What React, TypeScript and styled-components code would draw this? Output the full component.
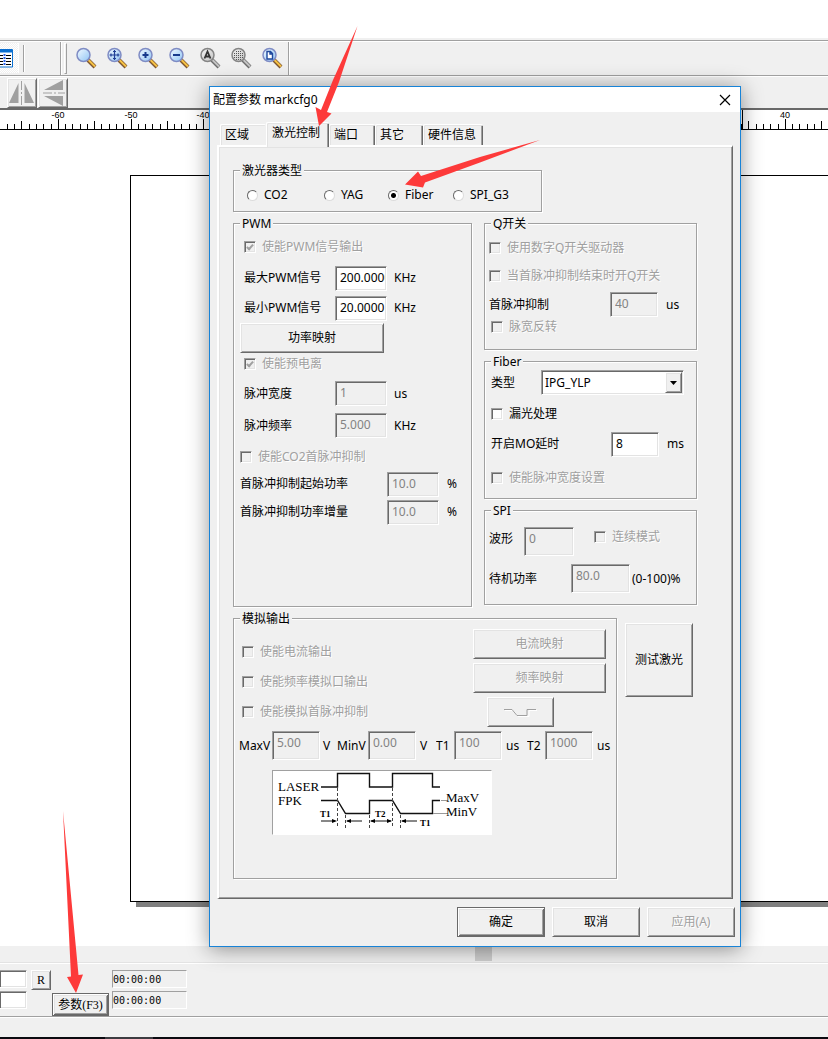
import React, { useState } from 'react';
import styled, { createGlobalStyle, css } from 'styled-components';

const Global = createGlobalStyle`
  *, *::before, *::after { box-sizing: border-box; }
  body {
    margin: 0;
    overflow-x: hidden;
    background: #fff;
    color: #000;
    font: 12px/16px "Noto Sans", "Noto Sans CJK SC", sans-serif;
  }
  button, input, select { font: inherit; color: inherit; margin: 0; }
`;

const FACE = '#f0f0f0';
const DARK = '#696969';
const MID = '#a0a0a0';
const LIGHT = '#e3e3e3';

const raised = css`
  border: 1px solid;
  border-color: #fff ${DARK} ${DARK} #fff;
  box-shadow: inset 1px 1px 0 ${LIGHT}, inset -1px -1px 0 ${MID};
`;

const sunken = css`
  border: 1px solid;
  border-color: ${MID} #fff #fff ${MID};
  box-shadow: inset 1px 1px 0 ${DARK}, inset -1px -1px 0 ${LIGHT};
`;

const embossed = css`
  color: ${MID};
  text-shadow: 1px 1px 0 #fff;
`;

/* ---------- main window ---------- */

const Shell = styled.div`
  position: relative;
  display: flex;
  flex-direction: column;
  min-height: 100vh;
  overflow: hidden;
`;

const TopGap = styled.div`
  height: 38px;
`;

const ToolStrip = styled.div`
  display: flex;
  height: 38px;
  padding-top: 2px;
  background: ${FACE};
  border-bottom: 1px solid ${MID};
`;

const StripBody = styled.div`
  display: flex;
  flex: 1;
  border-top: 1px solid ${MID};
  box-shadow: inset 0 1px 0 #fff;
`;

const ListButton = styled.button`
  width: 19px;
  height: 30px;
  margin-top: 2px;
  padding: 0;
  border: 0;
  border-right: 1px solid #fff;
  background: repeating-conic-gradient(#fff 0 25%, ${FACE} 0 50%) 0 0 / 2px 2px;
  text-align: left;
  svg { display: block; }
`;

const Divider = styled.span<{ $ml: number; $short?: boolean }>`
  width: 2px;
  margin-left: ${(p) => p.$ml}px;
  margin-top: ${(p) => (p.$short ? 4 : 1)}px;
  margin-bottom: ${(p) => (p.$short ? 3 : 0)}px;
  background: linear-gradient(90deg, ${MID} 50%, #fff 50%);
`;

const Grip = styled.span`
  width: 3px;
  margin: 2px 0 1px 2px;
  border: 1px solid;
  border-color: #fff ${MID} ${MID} #fff;
`;

const ZoomTools = styled.div`
  display: flex;
  gap: 9px;
  margin-left: 8px;
  padding-top: 6px;
`;

const ZoomButton = styled.button`
  width: 22px;
  height: 22px;
  padding: 0;
  border: 0;
  background: none;
  svg { display: block; }
`;

const MirrorStrip = styled.div`
  display: flex;
  gap: 1px;
  height: 34px;
  padding: 1px 0 0 7px;
  background: ${FACE};
  border-top: 1px solid #fff;
  border-bottom: 2px solid ${DARK};
`;

const MirrorButton = styled.button`
  ${raised}
  width: 30px;
  height: 30px;
  padding: 0;
  background: ${FACE};
  svg { display: block; margin: 1px; }
`;

const RulerSvg = styled.svg`
  display: block;
  width: 100%;
  height: 20px;
  border-bottom: 1px solid #000;
  font-family: "Liberation Sans", sans-serif;
  font-size: 9px;
`;

const Canvas = styled.main`
  display: flex;
  flex: 1;
  min-height: 700px;
  padding: 45px 0 44px 130px;
`;

const Sheet = styled.div`
  flex: 1;
  border: 1px solid #000;
  border-right: 0;
  background: #fff;
  box-shadow: 6px 5px 0 #808080;
`;

const ScrollTrack = styled.div`
  height: 17px;
  padding-left: 475px;
  background: ${FACE};
  border-bottom: 1px solid ${LIGHT};
`;

const ScrollThumb = styled.div`
  width: 17px;
  height: 15px;
  background: #cdcdcd;
`;

const MarkPanel = styled.div`
  display: flex;
  align-items: flex-start;
  height: 53px;
  padding-top: 6px;
  background: ${FACE};
  border-top: 1px solid #fff;
  font-family: "DejaVu Sans Mono", "Noto Sans CJK SC", monospace;
  font-size: 10px;
`;

const Stack = styled.div<{ $w: number; $ml?: number }>`
  display: flex;
  flex-direction: column;
  gap: 3px;
  width: ${(p) => p.$w}px;
  margin-left: ${(p) => p.$ml ?? 0}px;
`;

const EdgeInput = styled.input`
  ${sunken}
  width: 100%;
  height: 18px;
  border-left: 0;
  background: #fff;
`;

const TimeBox = styled.output`
  height: 18px;
  border: 1px solid;
  border-color: ${MID} #fff #fff ${MID};
  line-height: 17px;
`;

const RButton = styled.button`
  ${raised}
  width: 20px;
  height: 20px;
  margin-left: 4px;
  padding: 0;
  background: ${FACE};
  font-family: "Liberation Serif", serif;
  font-size: 12px;
`;

const defaultFrame = css`
  border: 1px solid ${DARK};
  box-shadow: inset 1px 1px 0 #fff, inset -1px -1px 0 ${DARK},
    inset 2px 2px 0 ${LIGHT}, inset -2px -2px 0 ${MID};
`;

const ParamButton = styled.button`
  ${defaultFrame}
  align-self: flex-end;
  width: 57px;
  height: 23px;
  margin-left: 1px;
  padding: 0;
  background: ${FACE};
  font-family: "Liberation Serif", "Noto Sans CJK SC", serif;
  font-size: 12px;
  white-space: nowrap;
`;

const StatusBar = styled.div`
  height: 21px;
  background: ${FACE};
  border-top: 1px solid ${MID};
  box-shadow: inset 0 1px 0 #fff;
`;

const TaskEdge = styled.div`
  height: 2px;
  background: linear-gradient(90deg, #0a0a10 105px, #3c3b40 105px 153px, #0a0a10 153px);
`;

/* ---------- dialog ---------- */

const Dialog = styled.section`
  position: absolute;
  isolation: isolate;
  left: 209px;
  top: 86px;
  width: 532px;
  border: 1px solid #1883d7;
  background: ${FACE};
  box-shadow: 0 2px 20px rgba(0, 0, 0, 0.42);
`;

const TitleBar = styled.header`
  display: flex;
  align-items: center;
  justify-content: space-between;
  height: 25px;
  padding: 0 9px 0 3px;
  background: #fff;
`;

const Title = styled.h1`
  margin: 0;
  font-size: 12px;
  font-weight: 400;
`;

const CloseButton = styled.button`
  padding: 0;
  border: 0;
  background: none;
  svg { display: block; }
`;

const Tabs = styled.div`
  display: flex;
  align-items: flex-end;
  height: 33px;
  padding-left: 10px;
`;

const Tab = styled.button<{ $w: number; $active?: boolean }>`
  position: relative;
  width: ${(p) => p.$w}px;
  height: ${(p) => (p.$active ? 25 : 21)}px;
  margin-bottom: ${(p) => (p.$active ? -2 : 0)}px;
  padding: 0 0 ${(p) => (p.$active ? 4 : 1)}px ${(p) => (p.$active ? 5 : 4)}px;
  z-index: ${(p) => (p.$active ? 1 : 0)};
  border: 0;
  border-top: 1px solid #fff;
  border-left: 1px solid #fff;
  border-radius: 2px 2px 0 0;
  box-shadow: inset 1px 1px 0 ${LIGHT}, inset -1px 0 0 ${DARK}, inset -2px 0 0 ${MID};
  background: ${FACE};
  text-align: left;
  white-space: nowrap;
  &:first-child { box-shadow: inset 1px 1px 0 ${LIGHT}; }
`;

const Panel = styled.div`
  display: flex;
  flex-direction: column;
  gap: 4px;
  margin: 0 7px;
  padding: 16px 0 19px 14px;
  border: solid;
  border-color: #fff ${DARK} ${DARK} #fff;
  border-width: 2px 1px 1px 2px;
  box-shadow: inset -1px -1px 0 ${MID}, inset 1px 1px 0 ${LIGHT};
`;

const Columns = styled.div<{ $gap: number }>`
  display: flex;
  align-items: flex-start;
  gap: ${(p) => p.$gap}px;
`;

const Column = styled.div`
  display: flex;
  flex-direction: column;
  gap: 4px;
`;

const Group = styled.fieldset<{ $w: number; $pb: number }>`
  width: ${(p) => p.$w}px;
  min-width: 0;
  margin: 0;
  padding: 0 0 ${(p) => p.$pb}px;
  border: 1px solid ${MID};
  box-shadow: 1px 1px 0 #fff, inset 1px 1px 0 #fff;
`;

const Legend = styled.legend`
  height: 15px;
  margin-left: 6px;
  padding: 0 2px;
  background: ${FACE};
  line-height: 15px;
`;

const Row = styled.div<{ $mt: number; $in: number; $mid?: boolean }>`
  display: flex;
  align-items: ${(p) => (p.$mid ? 'center' : 'baseline')};
  margin-top: ${(p) => p.$mt}px;
  padding-left: ${(p) => p.$in}px;
  white-space: nowrap;
`;

const Caption = styled.label<{ $w: number }>`
  width: ${(p) => p.$w}px;
  overflow: clip;
`;

const Unit = styled.span<{ $w?: number; $gap?: number }>`
  width: ${(p) => (p.$w ? `${p.$w}px` : 'auto')};
  padding-left: ${(p) => p.$gap ?? 8}px;
`;

const Field = styled.input<{ $w: number; $tall?: boolean }>`
  ${sunken}
  width: ${(p) => p.$w}px;
  height: ${(p) => (p.$tall ? 29 : 25)}px;
  padding: 0 1px ${(p) => (p.$tall ? 6 : 2)}px 4px;
  border-radius: 0;
  outline: 0;
  background: #fff;
  &:disabled { background: ${FACE}; color: #838383; }
`;

const CheckLabel = styled.label<{ $off?: boolean }>`
  display: flex;
  align-items: center;
  gap: 6px;
  height: 14px;
  line-height: 14px;
  white-space: nowrap;
  ${(p) => p.$off && embossed}
`;

const CheckBox = styled.input`
  ${sunken}
  appearance: none;
  display: grid;
  place-items: center;
  width: 12px;
  height: 12px;
  background: #fff;
  &:disabled { background: ${FACE}; }
  &:checked::after {
    content: "";
    width: 4px;
    height: 7px;
    margin-top: -2px;
    border: solid #000;
    border-width: 0 2px 2px 0;
    transform: rotate(42deg);
  }
  &:checked:disabled::after { border-color: ${MID}; }
`;

const RadioLabel = styled.label<{ $w: number }>`
  display: flex;
  align-items: center;
  gap: 6px;
  width: ${(p) => p.$w}px;
  height: 14px;
`;

const RadioInput = styled.input`
  appearance: none;
  width: 11px;
  height: 11px;
  border: 1px solid;
  border-color: ${DARK} #dcdcdc #dcdcdc ${DARK};
  border-radius: 50%;
  background: #fff;
  &:checked { background: radial-gradient(circle, #000 2px, #fff 3px); }
`;

const PushButton = styled.button<{ $w: number; $h?: number; $default?: boolean }>`
  ${(p) => (p.$default ? defaultFrame : raised)}
  display: grid;
  place-items: center;
  width: ${(p) => p.$w}px;
  height: ${(p) => p.$h ?? 30}px;
  padding: 0;
  background: ${FACE};
  white-space: nowrap;
  &:disabled { ${embossed} }
`;

const SelectBox = styled.div`
  ${sunken}
  display: flex;
  width: 143px;
  height: 25px;
  padding: 1px;
  background: #fff;
`;

const Select = styled.select`
  appearance: none;
  flex: 1;
  min-width: 0;
  padding: 0 0 0 2px;
  border: 0;
  outline: 0;
  background: transparent;
`;

const SelectArrow = styled.span`
  ${raised}
  display: grid;
  place-items: center;
  width: 17px;
  background: ${FACE};
  pointer-events: none;
`;

const AnalogTop = styled.div`
  display: flex;
  height: 101px;
  padding-left: 8px;
`;

const AnalogChecks = styled.div`
  display: flex;
  flex-direction: column;
  gap: 16px;
  width: 231px;
  padding-top: 19px;
`;

const AnalogButtons = styled.div`
  display: flex;
  flex-direction: column;
  gap: 4px;
  padding-top: 3px;
`;

const PulseSlot = styled.div`
  padding-left: 14px;
`;

const TestSlot = styled.div`
  padding-top: 12px;
`;

const Diagram = styled.svg`
  display: block;
  width: 220px;
  height: 65px;
  margin: 10px 0 0 38px;
  border: 1px solid;
  border-color: ${MID} #fff #fff ${MID};
  background: #fff;
  font-family: "Liberation Serif", serif;
`;

const Footer = styled.footer`
  display: flex;
  justify-content: flex-end;
  gap: 7px;
  padding: 8px 5px 9px;
`;

const Arrows = styled.svg`
  position: absolute;
  left: 0;
  top: 0;
  pointer-events: none;
`;

/* ---------- pieces ---------- */

type LensKind = 'plain' | 'move' | 'plus' | 'minus' | 'all' | 'grid' | 'page';

const lensNames: Record<LensKind, string> = {
  plain: '缩放', move: '平移', plus: '放大', minus: '缩小', all: '全部', grid: '选择', page: '页面',
};

function Lens({ kind }: { kind: LensKind }) {
  const gray = kind === 'all' || kind === 'grid';
  const id = `lens-${kind}`;
  return (
    <svg width="22" height="22" viewBox="0 0 22 22">
      <defs>
        <linearGradient id={id} x1="0" y1="0" x2="1" y2="1">
          <stop offset="0" stopColor={gray ? '#f4f4f4' : '#f2faff'} />
          <stop offset="1" stopColor={gray ? '#c2c2c2' : '#8fc4f4'} />
        </linearGradient>
      </defs>
      <path d="M13 13L20 20" stroke={gray ? '#6d6d6d' : '#7d5530'} strokeWidth="4" />
      <path d="M13.500 13L20 19.500" stroke={gray ? '#c4c4c4' : '#f6c244'} strokeWidth="2" />
      <circle cx="8.500" cy="8" r="6.500" fill={`url(#${id})`} stroke={gray ? '#858585' : '#7f8cc4'} strokeWidth="1.500" />
      {kind === 'move' && (
        <path d="M8.500 3v10M3.500 8h10M7 4.500h3M7 11.500h3M5 6.500v3M12 6.500v3" stroke="#1f3f95" strokeWidth="1.200" />
      )}
      {kind === 'plus' && <path d="M8.500 5v6M5.500 8h6" stroke="#173a8c" strokeWidth="2" />}
      {kind === 'minus' && <path d="M5 8h7" stroke="#173a8c" strokeWidth="2" />}
      {kind === 'all' && <path d="M5.500 11.500L8.500 4.500L11.500 11.500M6.500 9.500h4" stroke="#333" strokeWidth="1.800" fill="none" />}
      {kind === 'grid' && (
        <path d="M6 4.500h6M4 6.500h10M4 8.500h10M4 10.500h10M6 12.500h6" stroke="#555" strokeWidth="1" strokeDasharray="1 1" />
      )}
      {kind === 'page' && <path d="M6 4.500h3.500l2 2v5.500H6zM9 4.500v2.500h2.500" fill="#fff" stroke="#1d479d" strokeWidth="1.400" />}
    </svg>
  );
}

const rulerMarks = Array.from({ length: 151 }, (_, i) => i - 67);
const rulerLabels = [-60, -50, -40, -30, -20, -10, 0, 10, 20, 30, 40];
const rulerX = (n: number) => Math.round(494 + n * 7.27);

function Ruler() {
  return (
    <RulerSvg aria-hidden="true">
      {rulerMarks.map((n) => {
        const len = n % 10 === 0 ? 10 : n % 5 === 0 ? 8 : 5;
        return <rect key={n} x={rulerX(n)} y={19 - len} width="1" height={len} />;
      })}
      <rect x="742" y="0" width="1" height="19" />
      {rulerLabels.map((n) => (
        <text key={n} x={rulerX(n)} y="8" textAnchor="middle">{n}</text>
      ))}
    </RulerSvg>
  );
}

function Check({ text, off, on }: { text: string; off?: boolean; on?: boolean }) {
  return (
    <CheckLabel $off={off}>
      <CheckBox type="checkbox" disabled={off} defaultChecked={on} />
      {text}
    </CheckLabel>
  );
}

interface EntryProps {
  id: string;
  label: string;
  cap: number;
  value: string;
  w: number;
  unit: string;
  off?: boolean;
  tall?: boolean;
  unitW?: number;
  unitGap?: number;
}

function Entry({ id, label, cap, value, w, unit, off, tall, unitW, unitGap }: EntryProps) {
  return (
    <>
      <Caption htmlFor={id} $w={cap}>{label}</Caption>
      <Field id={id} $w={w} $tall={tall} defaultValue={value} disabled={off} />
      {unit && <Unit $w={unitW} $gap={unitGap}>{unit}</Unit>}
    </>
  );
}

function PulseDiagram() {
  return (
    <Diagram viewBox="1 1 218 63" role="img" aria-label="LASER FPK">
      <g fill="none" stroke="#111" strokeWidth="1.400">
        <path d="M49 17H65.500V3.500H97.500V17H120.500V3.500H160.500V17H168" />
        <path d="M49 30.500H65.500L73.500 43.500H97.500V30.500H120.500L128.500 43.500H160.500V30.500H168" />
      </g>
      <path d="M169 30.500H176M161 43.500H176" stroke="#999" />
      <g stroke="#444" strokeDasharray="3 2">
        <path d="M65.500 18V58M73.500 45V58M97.500 45V58M120.500 18V58M128.500 45V58" />
      </g>
      <g stroke="#111">
        <path d="M49 51H63M75 51H90M99 51H119M130 51H145" />
      </g>
      <path d="M65 51l-5-2v4zM74 51l5-2v4zM98 51l5-2v4zM120 51l-5-2v4zM129 51l5-2v4z" />
      <g fontSize="13">
        <text x="6" y="21">LASER</text>
        <text x="6" y="35">FPK</text>
        <text x="174" y="32">MaxV</text>
        <text x="174" y="46">MinV</text>
      </g>
      <g fontSize="9" fontWeight="700">
        <text x="48" y="47">T1</text>
        <text x="103" y="47">T2</text>
        <text x="148" y="56">T1</text>
      </g>
    </Diagram>
  );
}

const tabs = [
  { name: '区域', w: 46 },
  { name: '激光控制', w: 63 },
  { name: '端口', w: 46 },
  { name: '其它', w: 48 },
  { name: '硬件信息', w: 60 },
];

const lasers = [
  { name: 'CO2', w: 77 },
  { name: 'YAG', w: 64 },
  { name: 'Fiber', w: 65 },
  { name: 'SPI_G3', w: 65 },
];

const lenses: LensKind[] = ['plain', 'move', 'plus', 'minus', 'all', 'grid', 'page'];

function ConfigDialog() {
  const [laser, setLaser] = useState('Fiber');
  return (
    <Dialog role="dialog" aria-labelledby="cfg-title">
      <TitleBar>
        <Title id="cfg-title">配置参数 markcfg0</Title>
        <CloseButton aria-label="关闭">
          <svg width="12" height="12" viewBox="0 0 12 12">
            <path d="M1 1L11 11M11 1L1 11" stroke="#000" strokeWidth="1.200" />
          </svg>
        </CloseButton>
      </TitleBar>

      <Tabs role="tablist">
        {tabs.map((t, i) => (
          <Tab key={t.name} role="tab" aria-selected={i === 1} $w={t.w} $active={i === 1}>{t.name}</Tab>
        ))}
      </Tabs>

      <Panel role="tabpanel">
        <Group $w={309} $pb={9}>
          <Legend>激光器类型</Legend>
          <Row $mt={10} $in={13}>
            {lasers.map((l) => (
              <RadioLabel key={l.name} $w={l.w}>
                <RadioInput type="radio" name="laser" checked={laser === l.name} onChange={() => setLaser(l.name)} />
                {l.name}
              </RadioLabel>
            ))}
          </Row>
        </Group>

        <Columns $gap={12}>
          <Group $w={239} $pb={81}>
            <Legend>PWM</Legend>
            <Row $mt={9} $in={10}><Check text="使能PWM信号输出" off on /></Row>
            <Row $mt={12} $in={10}><Entry id="pmax" label="最大PWM信号" cap={91} value="200.0000" w={52} unit="KHz" unitGap={7} /></Row>
            <Row $mt={5} $in={10}><Entry id="pmin" label="最小PWM信号" cap={91} value="20.0000" w={52} unit="KHz" unitGap={7} /></Row>
            <Row $mt={2} $in={6}><PushButton $w={144}>功率映射</PushButton></Row>
            <Row $mt={4} $in={10}><Check text="使能预电离" off on /></Row>
            <Row $mt={10} $in={10} $mid><Entry id="pw" label="脉冲宽度" cap={91} value="1" w={52} unit="us" unitGap={7} off /></Row>
            <Row $mt={7} $in={10} $mid><Entry id="pf" label="脉冲频率" cap={91} value="5.000" w={52} unit="KHz" unitGap={7} off /></Row>
            <Row $mt={12} $in={6}><Check text="使能CO2首脉冲抑制" off /></Row>
            <Row $mt={8} $in={6}><Entry id="fs" label="首脉冲抑制起始功率" cap={147} value="10.0" w={52} unit="%" off /></Row>
            <Row $mt={3} $in={6}><Entry id="fi" label="首脉冲抑制功率增量" cap={147} value="10.0" w={52} unit="%" off /></Row>
          </Group>

          <Column>
            <Group $w={213} $pb={15}>
              <Legend>Q开关</Legend>
              <Row $mt={10} $in={4}><Check text="使用数字Q开关驱动器" off /></Row>
              <Row $mt={14} $in={4}><Check text="当首脉冲抑制结束时开Q开关" off /></Row>
              <Row $mt={9} $in={4} $mid><Entry id="fps" label="首脉冲抑制" cap={121} value="40" w={48} unit="us" off /></Row>
              <Row $mt={3} $in={6}><Check text="脉宽反转" off /></Row>
            </Group>

            <Group $w={213} $pb={13}>
              <Legend>Fiber</Legend>
              <Row $mt={1} $in={6} $mid>
                <Caption htmlFor="ftype" $w={50}>类型</Caption>
                <SelectBox>
                  <Select id="ftype" defaultValue="IPG_YLP">
                    <option>IPG_YLP</option>
                    <option>IPG_YLPM</option>
                  </Select>
                  <SelectArrow>
                    <svg width="7" height="4" viewBox="0 0 7 4"><path d="M0 0h7L3.500 4z" /></svg>
                  </SelectArrow>
                </SelectBox>
              </Row>
              <Row $mt={12} $in={6}><Check text="漏光处理" /></Row>
              <Row $mt={11} $in={6}><Entry id="mo" label="开启MO延时" cap={120} value="8" w={48} unit="ms" /></Row>
              <Row $mt={14} $in={6}><Check text="使能脉冲宽度设置" off /></Row>
            </Group>

            <Group $w={213} $pb={11}>
              <Legend>SPI</Legend>
              <Row $mt={9} $in={4}>
                <Entry id="wave" label="波形" cap={35} value="0" w={50} unit="" off tall />
                <Unit $gap={20}><Check text="连续模式" off /></Unit>
              </Row>
              <Row $mt={8} $in={4} $mid>
                <Entry id="standby" label="待机功率" cap={82} value="80.0" w={59} unit="(0-100)%" unitGap={2} off tall />
              </Row>
            </Group>
          </Column>
        </Columns>

        <Columns $gap={8}>
          <Group $w={384} $pb={43}>
            <Legend>模拟输出</Legend>
            <AnalogTop>
              <AnalogChecks>
                <Check text="使能电流输出" off />
                <Check text="使能频率模拟口输出" off />
                <Check text="使能模拟首脉冲抑制" off />
              </AnalogChecks>
              <AnalogButtons>
                <PushButton $w={133} disabled>电流映射</PushButton>
                <PushButton $w={133} disabled>频率映射</PushButton>
                <PulseSlot>
                  <PushButton $w={67} disabled aria-label="脉冲">
                    <svg width="33" height="9" viewBox="0 0 33 9" fill="none">
                      <path d="M1 2.500h8l5 6h11v-6h8" stroke="#fff" />
                      <path d="M0 1.500h8l5 6h10v-6h9" stroke={MID} />
                    </svg>
                  </PushButton>
                </PulseSlot>
              </AnalogButtons>
            </AnalogTop>
            <Row $mt={4} $in={5} $mid>
              <Entry id="maxv" label="MaxV" cap={33} value="5.00" w={48} unit="V" unitW={17} unitGap={3} off tall />
              <Entry id="minv" label="MinV" cap={31} value="0.00" w={48} unit="V" unitW={20} unitGap={4} off tall />
              <Entry id="t1" label="T1" cap={18} value="100" w={48} unit="us" unitW={25} unitGap={4} off tall />
              <Entry id="t2" label="T2" cap={18} value="1000" w={48} unit="us" unitGap={4} off tall />
            </Row>
            <PulseDiagram />
          </Group>
          <TestSlot>
            <PushButton $w={68} $h={74}>测试激光</PushButton>
          </TestSlot>
        </Columns>
      </Panel>

      <Footer>
        <PushButton $w={88} $default>确定</PushButton>
        <PushButton $w={88}>取消</PushButton>
        <PushButton $w={88} disabled>应用(A)</PushButton>
      </Footer>
    </Dialog>
  );
}

export default function App() {
  return (
    <Shell>
      <Global />
      <TopGap />
      <ToolStrip>
        <StripBody>
          <ListButton aria-label="对象列表">
            <svg width="14" height="30" viewBox="0 0 14 30">
              <path d="M0 6.500H12.500V24H0" fill="#fff" stroke="#0a6fd0" />
              <path d="M0 8h12" stroke="#0a6fd0" strokeWidth="3" />
              <path d="M0 12.500h3M6 12.500h5M0 15.500h3M6 15.500h5M0 18.500h3M6 18.500h5M0 21.500h3M6 21.500h5" stroke="#000" />
              <path d="M4.500 11v12" stroke="#2a62e8" strokeWidth="2" strokeDasharray="2 1" />
            </svg>
          </ListButton>
          <Divider $ml={4} $short />
          <Divider $ml={35} />
          <Grip />
          <ZoomTools>
            {lenses.map((k) => (
              <ZoomButton key={k} aria-label={lensNames[k]}><Lens kind={k} /></ZoomButton>
            ))}
          </ZoomTools>
          <Divider $ml={5} />
        </StripBody>
      </ToolStrip>
      <MirrorStrip>
        <MirrorButton aria-label="水平镜像">
          <svg width="26" height="26" viewBox="0 0 26 26">
            <path d="M9.500 3V23H0zM15.500 3V23H25z" fill={MID} />
            <path d="M12.500 1V25" stroke={MID} strokeDasharray="9 2 2 2" />
          </svg>
        </MirrorButton>
        <MirrorButton aria-label="垂直镜像">
          <svg width="26" height="26" viewBox="0 0 26 26">
            <path d="M4 10H23V0zM4 16H23V26z" fill={MID} />
            <path d="M3 13H25" stroke={MID} strokeDasharray="9 2 2 2" />
          </svg>
        </MirrorButton>
      </MirrorStrip>
      <Ruler />
      <Canvas><Sheet /></Canvas>
      <ScrollTrack><ScrollThumb /></ScrollTrack>
      <MarkPanel>
        <Stack $w={27}>
          <EdgeInput aria-label="数量" />
          <EdgeInput aria-label="总数" />
        </Stack>
        <RButton>R</RButton>
        <ParamButton>参数(F3)</ParamButton>
        <Stack $w={75} $ml={3}>
          <TimeBox>00:00:00</TimeBox>
          <TimeBox>00:00:00</TimeBox>
        </Stack>
      </MarkPanel>
      <StatusBar />
      <TaskEdge />
      <ConfigDialog />
      <Arrows width="828" height="1039" viewBox="0 0 828 1039" fill="#fd3a3a" aria-hidden="true">
        <path d="M357.500 26L333 80L321 110L315.500 107L319 126L331.500 113.500L327 112L339 82z" />
        <path d="M540 140L480 157L421 176L418 171.500L405 184.500L423 187.500L425 182.500L480 162.500z" />
        <path d="M63 811L71 976.500L67 977L76 993L83 974.500L78.500 975z" />
      </Arrows>
    </Shell>
  );
}
